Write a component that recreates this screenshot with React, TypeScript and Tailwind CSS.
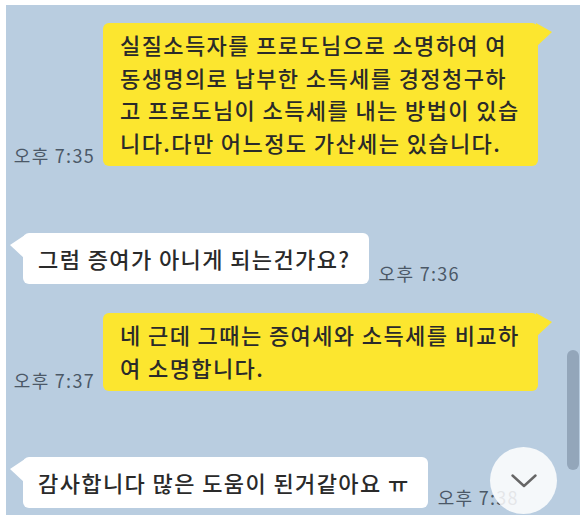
type Message = {
  id: number;
  mine: boolean;
  lines: string[];
  time: string;
};

const messages: Message[] = [
  {
    id: 1,
    mine: true,
    lines: [
      "실질소득자를 프로도님으로 소명하여 여",
      "동생명의로 납부한 소득세를 경정청구하",
      "고 프로도님이 소득세를 내는 방법이 있습",
      "니다.다만 어느정도 가산세는 있습니다.",
    ],
    time: "오후 7:35",
  },
  {
    id: 2,
    mine: false,
    lines: ["그럼 증여가 아니게 되는건가요?"],
    time: "오후 7:36",
  },
  {
    id: 3,
    mine: true,
    lines: ["네 근데 그때는 증여세와 소득세를 비교하", "여 소명합니다."],
    time: "오후 7:37",
  },
  {
    id: 4,
    mine: false,
    lines: ["감사합니다 많은 도움이 된거같아요 ㅠ"],
    time: "오후 7:38",
  },
];

const font = {
  fontFamily: '"Noto Sans CJK KR", "Noto Sans", sans-serif',
};

function Time({ value }: { value: string }) {
  return (
    <span className="shrink-0 text-[18px] leading-[22px] tracking-[1.3px] text-[#4b5867] whitespace-nowrap">
      {value}
    </span>
  );
}

function MyBubble({ msg }: { msg: Message }) {
  return (
    <div className="flex items-end justify-end gap-[8px] pr-[42px]">
      <Time value={msg.time} />
      <div className="relative w-[435px] rounded-[6px] bg-[#fce62f] pl-[17px] pt-[5px] pb-[8px] text-[22px] font-medium leading-[32.5px] tracking-[1.4px] text-[#2a2a2a]">
        {msg.lines.map((line, i) => (
          <div key={i} className="whitespace-nowrap">
            {line}
          </div>
        ))}
        {/* 말풍선 꼬리 */}
        <svg
          className="absolute left-[calc(100%-2px)] top-0"
          width="16"
          height="24"
          viewBox="0 0 16 24"
        >
          <polygon points="0,0 16,9 0,24" fill="#fce62f" />
        </svg>
      </div>
    </div>
  );
}

function OtherBubble({ msg }: { msg: Message }) {
  return (
    <div className="flex items-end gap-[10px] pl-[17px]">
      <div className="relative rounded-[6px] bg-white pl-[15px] pr-[18px] pt-[9px] pb-[10px] text-[22px] font-medium leading-[32px] tracking-[1.4px] text-[#2a2a2a]">
        {msg.lines.map((line, i) => (
          <div key={i} className="whitespace-nowrap">
            {line}
          </div>
        ))}
        <svg
          className="absolute right-[calc(100%-2px)] top-[2px]"
          width="15"
          height="24"
          viewBox="0 0 15 24"
        >
          <polygon points="15,0 0,10 15,24" fill="#ffffff" />
        </svg>
      </div>
      <Time value={msg.time} />
    </div>
  );
}

export default function App() {
  return (
    <div
      className="w-[586px] h-[529px] bg-white pt-[5px] pl-[6px] pr-[6px] pb-[14px]"
      style={font}
    >
      <div className="relative h-full overflow-hidden bg-[#b9cde0]">
        <div className="flex flex-col pt-[18px]">
          <MyBubble msg={messages[0]} />
          <div className="mt-[67px]">
            <OtherBubble msg={messages[1]} />
          </div>
          <div className="mt-[29px]">
            <MyBubble msg={messages[2]} />
          </div>
          <div className="mt-[66px]">
            <OtherBubble msg={messages[3]} />
          </div>
        </div>

        {/* 스크롤바 */}
        <div className="absolute right-[1px] top-[345px] h-[120px] w-[12px] rounded-full bg-[#93a6ba]" />

        {/* 아래로 스크롤 버튼 */}
        <div className="absolute left-[484px] top-[442px] flex h-[67px] w-[67px] items-center justify-center rounded-full bg-white/85">
          <svg width="26" height="14" viewBox="0 0 26 14" fill="none">
            <polyline
              points="1.5,1.5 13,12 24.5,1.5"
              stroke="#666"
              strokeWidth="2.4"
              strokeLinecap="round"
              strokeLinejoin="round"
            />
          </svg>
        </div>
      </div>
    </div>
  );
}
